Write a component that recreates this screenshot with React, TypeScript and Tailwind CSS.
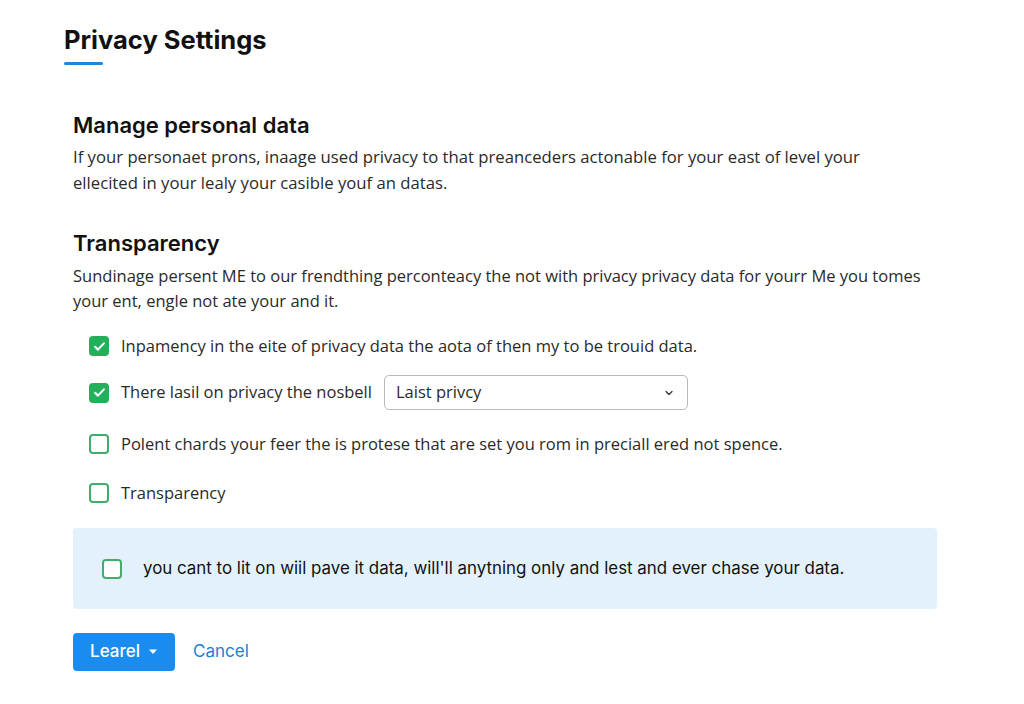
import React from "react";

function Check({ checked, className = "" }: { checked?: boolean; className?: string }) {
  if (checked) {
    return (
      <span className={"flex h-[20px] w-[20px] shrink-0 items-center justify-center rounded-[4px] bg-[#22b05a] " + className}>
        <svg width="15" height="15" viewBox="0 0 24 24" fill="none" stroke="white" strokeWidth="3.4" strokeLinecap="round" strokeLinejoin="round">
          <path d="M5 12.5l4.5 4.5L19 7" />
        </svg>
      </span>
    );
  }
  return <span className={"block h-[20px] w-[20px] shrink-0 rounded-[4px] border-2 border-[#3fae6a] bg-white " + className} />;
}

export default function App() {
  return (
    <div className="min-h-[704px] w-[1024px] bg-white text-[#1c1c1c]" style={{ fontFamily: "'Open Sans', sans-serif" }}>
      <div className="pl-[64px] pt-[24px]">
        <h1 className="text-[25.5px] font-bold leading-[32px] text-[#111]" style={{ fontFamily: "Inter, sans-serif" }}>
          Privacy Settings
        </h1>
        <div className="mt-[6px] h-[3px] w-[39px] rounded bg-[#1f86d8]" />
      </div>

      <div className="pl-[73px] pr-[87px]">
        <h2 className="mt-[46px] text-[22px] font-semibold leading-[28px] text-[#111]" style={{ fontFamily: "Inter, sans-serif" }}>
          Manage personal data
        </h2>
        <p className="mt-[5px] text-[16.7px] leading-[26px] text-[#2a2a2a]">
          If your personaet prons, inaage used privacy to that preanceders actonable for your east of level your
          <br />
          ellecited in your lealy your casible youf an datas.
        </p>

        <h2 className="mt-[33px] text-[22px] font-semibold leading-[28px] text-[#111]" style={{ fontFamily: "Inter, sans-serif" }}>
          Transparency
        </h2>
        <p className="mt-[6px] text-[16.5px] leading-[25px] text-[#2a2a2a]">
          Sundinage persent ME to our frendthing perconteacy the not with privacy privacy data for yourr Me you tomes
          <br />
          your ent, engle not ate your and it.
        </p>

        <div className="mt-[20px] flex flex-col pl-[16px]">
          <div className="flex h-[26px] items-center gap-[12px]">
            <Check checked />
            <span className="text-[16.5px] text-[#2a2a2a]">Inpamency in the eite of privacy data the aota of then my to be trouid data.</span>
          </div>
          <div className="mt-[16px] flex h-[35px] items-center gap-[12px]">
            <Check checked />
            <span className="text-[16.5px] text-[#2a2a2a]">There lasil on privacy the nosbell</span>
            <div className="flex h-[35px] w-[304px] items-center justify-between rounded-[5px] border border-[#b9b9b9] bg-white pl-[11px] pr-[12px]">
              <span className="text-[16.5px] text-[#2a2a2a]">Laist privcy</span>
              <svg width="12" height="12" viewBox="0 0 24 24" fill="none" stroke="#333" strokeWidth="2.5" strokeLinecap="round" strokeLinejoin="round">
                <path d="M6 9l6 6 6-6" />
              </svg>
            </div>
          </div>
          <div className="mt-[21px] flex h-[26px] items-center gap-[12px]">
            <Check />
            <span className="text-[16.5px] text-[#2a2a2a]">Polent chards your feer the is protese that are set you rom in preciall ered not spence.</span>
          </div>
          <div className="mt-[23px] flex h-[26px] items-center gap-[12px]">
            <Check />
            <span className="text-[16.5px] text-[#2a2a2a]">Transparency</span>
          </div>
        </div>

        <div className="mt-[22px] flex h-[81px] items-center gap-[21px] rounded-[4px] bg-[#e3f1fc] pl-[29px]">
          <Check />
          <span className="text-[16.9px] text-[#111]" style={{ fontFamily: "Inter, sans-serif" }}>
            you cant to lit on wiil pave it data, will'll anytning only and lest and ever chase your data.
          </span>
        </div>

        <div className="mt-[24px] flex items-center gap-[18px]">
          <button className="flex h-[38px] w-[102px] items-center justify-center gap-[8px] rounded-[4px] bg-[#1a8cf0] text-[17px] font-medium text-white" style={{ fontFamily: "Inter, sans-serif" }}>
            Learel
            <svg width="10" height="6" viewBox="0 0 10 6"><path d="M1 0.5h8L5 5z" fill="white" /></svg>
          </button>
          <span className="text-[17px] text-[#1a7fd0]" style={{ fontFamily: "Inter, sans-serif" }}>Cancel</span>
        </div>
      </div>
    </div>
  );
}
